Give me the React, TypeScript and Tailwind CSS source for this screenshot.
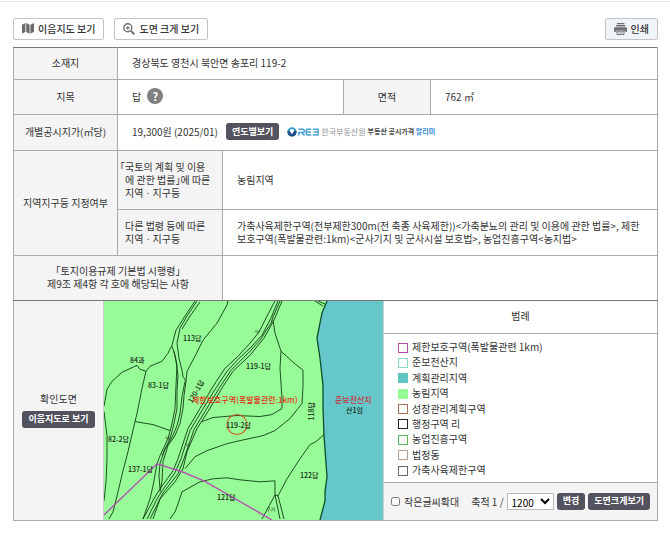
import type { ReactNode } from 'react';

const legend = [
  { label: '제한보호구역(폭발물관련 1km)', swatch: 'border-[#b04fb0] bg-white' },
  { label: '준보전산지', swatch: 'border-[#86dcc4] bg-white' },
  { label: '계획관리지역', swatch: 'border-[#5fc6c4] bg-[#5fc6c4]' },
  { label: '농림지역', swatch: 'border-[#97fb97] bg-[#97fb97]' },
  { label: '성장관리계획구역', swatch: 'border-[#a5705c] bg-white' },
  { label: '행정구역 리', swatch: 'border-[#222] bg-white' },
  { label: '농업진흥구역', swatch: 'border-[#5dbb5d] bg-white' },
  { label: '법정동', swatch: 'border-[#b8a095] bg-white' },
  { label: '가축사육제한구역', swatch: 'border-[#666] bg-white' },
];

// parcel and road outlines
const parcelLines = [
  '91,0 81,15 72,29 68,44 64,52 58,60 46,65 42,70 38,87 33,112 31,120 24,150 19,169 13,194 9,210 5,217',
  '68,45 71,54 73,64 72,84 71,107 68,122 64,137 56,154 53,162 49,184 46,197 39,217',
  '70,50 72,60 74,74 73,90 73,107 70,122 66,137 58,154',
  '93,0 83,15 76,27 73,42 75,57 78,69 79,75 82,80 80,94 79,107 76,122 71,134 64,144 59,160 58,179 56,190',
  '81,80 78,95 76,112 73,124 68,136 61,147 56,162 55,174 56,187',
  '96,1 86,15 78,28',
  '124,0 123,4 113,22 99,39 91,55 83,70 82,80',
  '42,70 36,68 33,64 18,71 8,80 3,88 0,105',
  '31,120 49,123 66,129',
  '0,110 3,134 3,157 2,180 0,199',
  '171,0 163,15 155,31 146,42 134,55 121,67 109,85 96,107 84,127 74,157 69,169 56,187 51,195 39,217',
  '174,0 167,17 158,34 146,47 135,57 123,70 111,88 98,109 86,129 77,157 71,171 58,189 53,197 43,217',
  '176,0 169,16 167,22 156,39 146,50 127,69 115,87 101,110 90,128 80,157 74,172 59,191 55,199 46,217',
  '178,0 170,19 160,37 146,54 129,70 119,85 104,110 93,127 83,150 79,167 71,180 56,197 49,217',
  '169,19 171,32 177,50 176,67 178,97 178,107 168,113 156,115 133,114 109,116 98,120',
  '177,50 188,60 199,69 199,85 198,102 186,117 171,129 159,134 136,139 123,142 103,149 91,155 81,167',
  '66,217 71,210 74,202 78,190 96,180 109,177 123,176 136,178 156,180 171,179 171,193 158,217',
  '171,193 176,217',
  '174,194 180,217',
  '171,193 174,194 183,177 196,157 206,143 212,140 220,133',
  '211,0 219,5',
  '214,0 221,3',
];

const parcelLabels = [
  { text: '113답', x: 79, y: 40 },
  { text: '84과', x: 26, y: 62 },
  { text: '83-1답', x: 44, y: 87 },
  { text: '119-1답', x: 142, y: 68 },
  { text: '119-2답', x: 122, y: 126 },
  { text: '82-2답', x: 4, y: 140 },
  { text: '137-1답', x: 24, y: 170 },
  { text: '121답', x: 113, y: 198 },
  { text: '122답', x: 196, y: 176 },
  { text: '산1임', x: 242, y: 111 },
];

function DarkButton({ children }: { children: ReactNode }) {
  return (
    <button
      type="button"
      className="h-[17px] shrink-0 whitespace-nowrap rounded-[3px] bg-[#53535f] px-[6px] text-[9px] leading-[16px] font-bold text-white"
    >
      {children}
    </button>
  );
}

function ToolButton({ icon, children, tint }: { icon: ReactNode; children: ReactNode; tint?: boolean }) {
  return (
    <button
      type="button"
      className={`flex h-[22px] items-center gap-1 rounded-[2px] border border-[#c4c4c8] px-2 pb-px font-medium whitespace-nowrap text-[#333] ${
        tint ? 'bg-[#eff4f9]' : 'bg-white'
      }`}
    >
      {icon}
      {children}
    </button>
  );
}

function MapIcon() {
  return (
    <svg viewBox="0 0 12 11" className="h-[11px] w-3" fill="#6b6b6b">
      <path d="M0 1.8 3.4 0v8.8L0 10.8zM4.2 0l3.4 1.8v9L4.2 9zM8.4 1.8 12 0v8.8l-3.6 2z" />
    </svg>
  );
}

function MagnifierIcon() {
  return (
    <svg viewBox="0 0 12 12" className="size-3" fill="none" stroke="#707070">
      <circle cx="4.8" cy="4.8" r="4" strokeWidth="1.4" />
      <path d="M4.8 2.900V6.700M2.900 4.800H6.700" strokeWidth="1.2" />
      <path d="M7.900 7.900 11.300 11.300" strokeWidth="2" />
    </svg>
  );
}

function PrinterIcon() {
  return (
    <svg viewBox="0 0 13 12" className="h-3 w-[13px]">
      <path d="M3 0h7.4v1.2H3zM2.2 2h9v1.6h-9z" fill="#6d6d72" />
      <path d="M1.4 4.2h10.2c.8 0 1.4.5 1.4 1.3v3.3h-2.4V7.4H2.4v1.4H0V5.5c0-.8.6-1.3 1.4-1.3z" fill="#6d6d72" />
      <path d="M3 8.2h7v3.2H3z" fill="#fff" stroke="#6d6d72" strokeWidth="1" />
      <path d="M4.3 9.8h4.4" stroke="#6d6d72" strokeWidth=".7" />
    </svg>
  );
}

function RebLogo() {
  return (
    <a href="#reb" className="flex items-center gap-[2px] whitespace-nowrap">
      <svg viewBox="0 0 32 10" className="h-[10px] w-8">
        <path d="M5 .3a4.7 4.7 0 0 1 4.7 4.7L7.4 5A2.4 2.4 0 1 0 2.7 5L.3 5A4.7 4.7 0 0 1 5 .3z" fill="#2f9fc9" />
        <path d="M.3 4.5C.3 7.500 2.300 9.700 5 9.700S9.700 7.500 9.700 4.500L7.400 3.500 5 7.200 2.600 4z" fill="#1c4f86" />
        <g fill="none" stroke="#4aa3d2" strokeWidth="1.5">
          <path d="M11.800 8.500V5.500H16.500Q17.400 5.500 17.400 4.300T16.500 2.200H11.500M14.500 5.500 17.600 8.500" />
          <path d="M24.200 2.200H20.300Q19.300 2.200 19.300 3.400V6.800Q19.300 7.900 20.300 7.900H24.200M19.300 5.100H23.900" />
          <path d="M25.800 2.200H31V7.900H25.800M26.500 5.100H31" />
        </g>
      </svg>
      <span className="text-[8px] text-[#8b9096]">한국부동산원</span>
      <span className="text-[7px] font-bold text-[#444]">
        부동산 공시가격 <span className="text-[#2d87cf]">알리미</span>
      </span>
    </a>
  );
}

function ParcelMap() {
  return (
    <svg
      viewBox="0 0 279 218"
      preserveAspectRatio="none"
      role="img"
      aria-label="확인도면"
      className="block h-full w-full bg-[#97fb97]"
    >
      <path
        d="M223 0 218 12 213 37 216 57 219 84 219 107 220 134 223 175 221 190 221 199 216 218H279V0z"
        fill="#65c7ca"
      />
      <g fill="none" stroke="#103c14" strokeWidth=".9">
        {parcelLines.map((points) => (
          <polyline key={points} points={points} />
        ))}
      </g>
      <polyline
        points="223,0 218,12 213,37 216,57 219,84 219,107 220,134 223,175 221,190 221,199 216,218"
        fill="none"
        stroke="#0c4f2c"
        strokeWidth="1.3"
      />
      <polyline points="0,213 53,162 78,170 100,179 168,218" fill="none" stroke="#b355b0" strokeWidth="1.4" />
      <circle cx="133" cy="123" r="10" fill="none" stroke="#d2552a" strokeWidth="1" />
      <g fontSize="7" fill="#142a14" fontWeight="500">
        {parcelLabels.map((l) => (
          <text key={l.text} x={l.x} y={l.y}>
            {l.text}
          </text>
        ))}
        <text transform="translate(88 102) rotate(-60)">120-1답</text>
        <text transform="translate(210 119) rotate(-90)">118답</text>
      </g>
      <g fontSize="5" fill="#1c3a1c">
        <text transform="translate(153 33) rotate(-50)">도</text>
        <text transform="translate(64 139) rotate(-60)">도</text>
        <text transform="translate(84 146) rotate(-60)">도</text>
        <text x="162" y="209">구거</text>
      </g>
      <g fontSize="8" fill="#e0331c" fontWeight="500">
        <text x="88" y="102">제한보호구역(폭발물관련:1km)</text>
        <text x="231" y="102" fill="#c4383c">준보전산지</text>
      </g>
    </svg>
  );
}

export default function App() {
  const th = 'border border-[#aaa] bg-[#f4f4f4] pb-[2px] font-normal text-[#333]';
  const td = 'border border-[#aaa] px-[14px] pb-[2px]';

  return (
    <div className="bg-white pt-px font-['Noto_Sans_CJK_KR','Noto_Sans',sans-serif] text-[10px] leading-[13px] text-[#333]">
      <main className="border-t border-[#e2e2e2] pr-3 pl-[13px]">
        <div className="flex items-center gap-[10px] pt-4 pb-[7px]">
          <ToolButton icon={<MapIcon />}>이음지도 보기</ToolButton>
          <ToolButton icon={<MagnifierIcon />}>도면 크게 보기</ToolButton>
          <div className="ml-auto">
            <ToolButton tint icon={<PrinterIcon />}>
              인쇄
            </ToolButton>
          </div>
        </div>

        <table className="w-full table-fixed border-collapse border-t border-[#777]">
          <colgroup>
            <col className="w-[104px]" />
            <col className="w-[105px]" />
            <col className="w-[121px]" />
            <col className="w-[87px]" />
            <col />
          </colgroup>
          <tbody>
            <tr className="h-8">
              <th scope="row" className={`${th} border-t-[#777]`}>소재지</th>
              <td colSpan={4} className={`${td} border-t-[#777]`}>경상북도 영천시 북안면 송포리 119-2</td>
            </tr>
            <tr className="h-[35px]">
              <th scope="row" className={th}>지목</th>
              <td colSpan={2} className={td}>
                <div className="flex items-center gap-[6px]">
                  답
                  <button
                    type="button"
                    aria-label="지목 도움말"
                    className="size-4 rounded-full bg-[#808080] text-center text-[11px] leading-4 font-bold text-white"
                  >
                    ?
                  </button>
                </div>
              </td>
              <th scope="row" className={th}>면적</th>
              <td className={td}>762 ㎡</td>
            </tr>
            <tr className="h-9">
              <th scope="row" className={th}>개별공시지가(㎡당)</th>
              <td colSpan={4} className={td}>
                <div className="flex items-center gap-2">
                  <span>19,300원 (2025/01)</span>
                  <DarkButton>연도별보기</DarkButton>
                  <RebLogo />
                </div>
              </td>
            </tr>
            <tr className="h-[59px]">
              <th scope="rowgroup" rowSpan={2} className={`${th} border-t-[#777]`}>지역지구등 지정여부</th>
              <th
                scope="row"
                className={`${th} border-t-[#777] pl-[7px] text-left -indent-[5px] whitespace-nowrap [font-feature-settings:'halt']`}
              >
                「국토의 계획 및 이용
                <br />
                <span className="inline-block indent-0">에 관한 법률」에 따른</span>
                <br />
                <span className="inline-block indent-0">지역ㆍ지구등</span>
              </th>
              <td colSpan={3} className={`${td} border-t-[#777]`}>농림지역</td>
            </tr>
            <tr className="h-[46px]">
              <th scope="row" className={`${th} pl-[7px] text-left`}>
                다른 법령 등에 따른
                <br />
                지역ㆍ지구등
              </th>
              <td colSpan={3} className={td}>
                가축사육제한구역(전부제한300m(전 축종 사육제한))&lt;가축분뇨의 관리 및 이용에 관한 법률&gt;,
                제한보호구역(폭발물관련:1km)&lt;군사기지 및 군사시설 보호법&gt;, 농업진흥구역&lt;농지법&gt;
              </td>
            </tr>
            <tr className="h-[45px]">
              <th scope="row" colSpan={2} className={`${th} border-b-[#777] [font-feature-settings:'halt']`}>
                「토지이용규제 기본법 시행령」
                <br />
                제9조 제4항 각 호에 해당되는 사항
              </th>
              <td colSpan={3} className={`${td} border-b-[#777]`} />
            </tr>
          </tbody>
        </table>

        <section className="flex border-x border-b border-[#aaa]">
          <div className="flex w-[90px] shrink-0 flex-col items-center justify-center gap-[6px] border-r border-[#ccc] bg-[#f4f4f4] pb-[2px]">
            <h2>확인도면</h2>
            <DarkButton>이음지도로 보기</DarkButton>
          </div>
          <div className="h-[219px] w-[280px] shrink-0 border-r border-[#ccc]">
            <ParcelMap />
          </div>
          <div className="flex min-w-0 flex-1 flex-col">
            <h3 className="border-b border-[#aaa] pt-2 pb-[10px] text-center leading-[14px]">범례</h3>
            <ul className="flex flex-1 flex-col justify-between px-[14px] py-[6px]">
              {legend.map((item) => (
                <li key={item.label} className="flex items-center gap-1">
                  <span className={`mt-[2px] size-[10px] border ${item.swatch}`} />
                  {item.label}
                </li>
              ))}
            </ul>
            <div className="flex h-[38px] items-center gap-[3px] border-t border-[#aaa] bg-[#f4f4f4] px-[7px] pb-px whitespace-nowrap">
              <label className="mr-[9px] flex items-center gap-1">
                <input type="checkbox" className="size-[9px]" />
                작은글씨확대
              </label>
              <label htmlFor="scale">축척 1 /</label>
              <select
                id="scale"
                defaultValue="1200"
                className="h-[17px] w-12 border border-[#bbb] bg-white pb-[2px] text-[10px] leading-[13px] text-black"
              >
                <option>600</option>
                <option>1200</option>
                <option>2400</option>
              </select>
              <DarkButton>변경</DarkButton>
              <DarkButton>도면크게보기</DarkButton>
            </div>
          </div>
        </section>
      </main>
    </div>
  );
}
